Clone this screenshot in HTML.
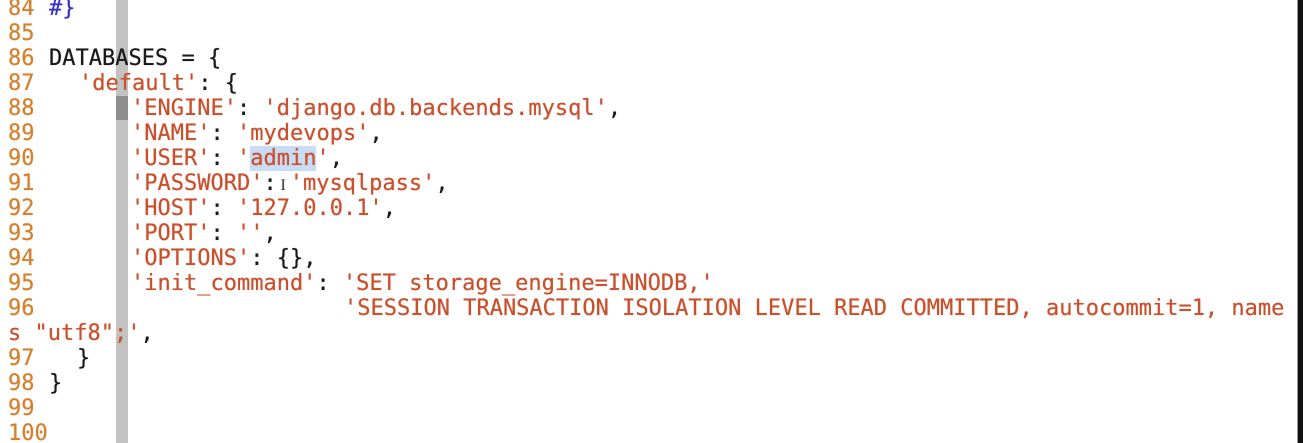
<!DOCTYPE html>
<html><head><style>
html,body{margin:0;padding:0;background:#fff;width:1303px;height:443px;overflow:hidden;position:relative}
.r{position:absolute;left:8px;height:25px;line-height:25px;font-family:"DejaVu Sans Mono","Liberation Mono",monospace;font-size:22px;white-space:pre;color:#1a1a1a;text-shadow:0 0 0.6px currentColor}
.n{color:#d3812f;display:inline-block;width:41px}
.s{color:#c9502c}
.c{color:#3a32c4}
.bar{position:absolute;left:116px;top:0;width:12px;height:443px;background:#c2c2c2}
.bar2{position:absolute;left:116px;top:96px;width:12px;height:24px;background:#8e8e8e}
.hl{background:#c8dcf5}
</style></head><body>
<div class="bar"></div><div class="bar2"></div>
<div style="position:absolute;left:1297px;top:0;width:1px;height:443px;background:#999"></div>
<div style="position:absolute;left:1298px;top:0;width:5px;height:443px;background:#111"></div>
<div class="r" style="top:-4px"><span class="n">84</span><span class="c">#}</span></div>
<div class="r" style="top:21px"><span class="n">85</span></div>
<div class="r" style="top:46px"><span class="n">86</span>DATABASES = {</div>
<div class="r" style="top:71px"><span class="n">87</span><span style="display:inline-block;width:30px"></span><span class="s">'default'</span>: {</div>
<div class="r" style="top:96px"><span class="n">88</span><span style="display:inline-block;width:82px"></span><span class="s">'ENGINE'</span>: <span class="s">'django.db.backends.mysql'</span>,</div>
<div class="r" style="top:121px"><span class="n">89</span><span style="display:inline-block;width:82px"></span><span class="s">'NAME'</span>: <span class="s">'mydevops'</span>,</div>
<div class="r" style="top:146px"><span class="n">90</span><span style="display:inline-block;width:82px"></span><span class="s">'USER'</span>: <span class="s">'<span class="hl">admin</span>'</span>,</div>
<div class="r" style="top:171px"><span class="n">91</span><span style="display:inline-block;width:82px"></span><span class="s">'PASSWORD'</span>:<span style="display:inline-block;width:13px;font-family:'Liberation Serif',serif;font-size:16px;color:#444;text-align:center">I</span><span class="s">'mysqlpass'</span>,</div>
<div class="r" style="top:196px"><span class="n">92</span><span style="display:inline-block;width:82px"></span><span class="s">'HOST'</span>: <span class="s">'127.0.0.1'</span>,</div>
<div class="r" style="top:221px"><span class="n">93</span><span style="display:inline-block;width:82px"></span><span class="s">'PORT'</span>: <span class="s">''</span>,</div>
<div class="r" style="top:246px"><span class="n">94</span><span style="display:inline-block;width:82px"></span><span class="s">'OPTIONS'</span>: {},</div>
<div class="r" style="top:271px"><span class="n">95</span><span style="display:inline-block;width:82px"></span><span class="s">'init_command'</span>: <span class="s">'SET storage_engine=INNODB,'</span></div>
<div class="r" style="top:296px"><span class="n">96</span><span style="display:inline-block;width:295px"></span><span class="s">'SESSION TRANSACTION ISOLATION LEVEL READ COMMITTED, autocommit=1, name</span></div>
<div class="r" style="top:321px"><span class="s">s "utf8";'</span>,</div>
<div class="r" style="top:346px"><span class="n">97</span><span style="display:inline-block;width:28px"></span>}</div>
<div class="r" style="top:371px"><span class="n">98</span>}</div>
<div class="r" style="top:396px"><span class="n">99</span></div>
<div class="r" style="top:421px"><span class="n">100</span></div>
</body></html>
